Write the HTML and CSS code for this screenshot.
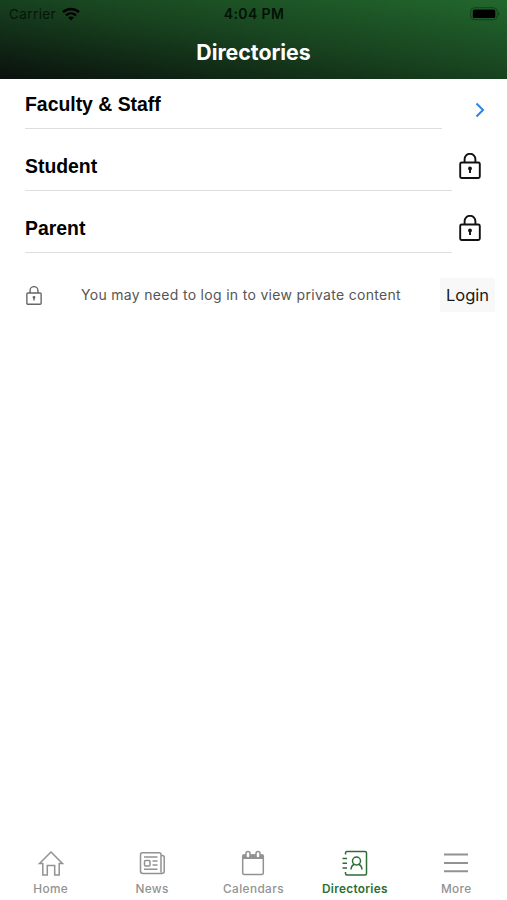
FILE: index.html
```
<!DOCTYPE html>
<html lang="en">
<head>
    <meta charset="utf-8">
    <title>Directories</title>
    <link rel="stylesheet" href="styles.css">
</head>
<body>
    <header>
        <div class="status">
            <div class="carrier">
                <span>Carrier</span>
                <svg width="18" height="14" viewBox="0 0 18 14">
                    <path d="M1 5.200C5.500 .9 12.500 .9 17 5.200" fill="none" stroke="#000" stroke-width="2.500"/>
                    <path d="M4 8.300c3-2.700 7-2.700 10 0" fill="none" stroke="#000" stroke-width="2.300"/>
                    <path d="M6.200 10.600c1.700-1.400 3.900-1.400 5.600 0L9 13.400z"/>
                </svg>
            </div>
            <span class="time">4:04 PM</span>
            <svg class="battery" width="30" height="14" viewBox="0 0 30 14">
                <rect x=".7" y=".7" width="26.600" height="12" rx="4" fill="none" stroke="#000" stroke-opacity=".35"/>
                <rect x="2.800" y="2.500" width="22.500" height="8.500" rx="1.500"/>
                <path d="M28.500 4.700v4c1.300-.8 1.300-3.200 0-4z" fill-opacity=".4"/>
            </svg>
        </div>
        <h1>Directories</h1>
    </header>

    <main>
        <ul class="list">
            <li class="open">
                <span class="name">Faculty &amp; Staff</span>
                <svg class="chevron" width="10" height="16" viewBox="0 0 10 16"><path d="M1.500 1.500L8 8l-6.500 6.500"/></svg>
            </li>
            <li>
                <span class="name">Student</span>
                <svg class="lock" width="22" height="26" viewBox="0 0 22 26">
                    <path d="M5.600 9.500V6.200a5.400 5.400 0 0 1 10.800 0v3.300"/>
                    <rect x="1.200" y="9.500" width="19.600" height="15.500" rx="1.500"/>
                    <circle cx="11" cy="15.500" r="1"/>
                    <path d="M11 15.500v4.500"/>
                </svg>
            </li>
            <li>
                <span class="name">Parent</span>
                <svg class="lock" width="22" height="26" viewBox="0 0 22 26">
                    <path d="M5.600 9.500V6.200a5.400 5.400 0 0 1 10.800 0v3.300"/>
                    <rect x="1.200" y="9.500" width="19.600" height="15.500" rx="1.500"/>
                    <circle cx="11" cy="15.500" r="1"/>
                    <path d="M11 15.500v4.500"/>
                </svg>
            </li>
        </ul>
        <div class="login">
            <svg class="lock" width="16" height="19" viewBox="0 0 22 26">
                <path d="M5.600 9.500V6.200a5.400 5.400 0 0 1 10.800 0v3.300"/>
                <rect x="1.200" y="9.500" width="19.600" height="15.500" rx="1.500"/>
                <circle cx="11" cy="15.500" r="1"/>
                <path d="M11 15.500v4.500"/>
            </svg>
            <p>You may need to log in to view private content</p>
            <button type="button">Login</button>
        </div>
    </main>

    <nav>
        <a>
            <svg width="28" height="28" viewBox="0 0 28 28">
                <path d="M2.500 14.500L14 3l11.500 11.500h-3.300V26h-4.500v-9.500h-7.400V26h-4.500V14.500z"/>
            </svg>
            <span>Home</span>
        </a>
        <a>
            <svg width="28" height="28" viewBox="0 0 28 28">
                <path d="M23 6.500h1.200a2 2 0 0 1 2 2V22a2.500 2.500 0 0 1-2.500 2.500H5A2.500 2.500 0 0 1 2.500 22V5.500A1.800 1.800 0 0 1 4.300 3.700h16.900A1.800 1.800 0 0 1 23 5.500v18"/>
                <path d="M6 8h13.500M14.500 12h5M14.500 16h5M6 20.200h13.500"/>
                <rect x="6.500" y="11.500" width="5.500" height="5.500" rx="1"/>
            </svg>
            <span>News</span>
        </a>
        <a>
            <svg width="28" height="28" viewBox="0 0 28 28">
                <rect x="3.700" y="6" width="20.600" height="19.500" rx="1.500"/>
                <path class="fill" d="M3.500 5.500h21V10h-21z"/>
                <rect class="ring" x="7" y="2.500" width="4" height="6.500" rx="2"/>
                <rect class="ring" x="17" y="2.500" width="4" height="6.500" rx="2"/>
            </svg>
            <span>Calendars</span>
        </a>
        <a class="active">
            <svg width="28" height="28" viewBox="0 0 28 28">
                <path d="M4.500 5.500V4a1.500 1.500 0 0 1 1.500-1.500h18A1.500 1.500 0 0 1 25.500 4v20.500A1.500 1.500 0 0 1 24 26H6a1.500 1.500 0 0 1-1.500-1.500V23M1.500 9.500h4.500M1.500 14.200h4.500M1.500 19h4.500"/>
                <circle cx="15.500" cy="12" r="4"/>
                <path d="M10 20.500c.2-2.700 1.500-4.500 3.600-5.200M21 20.500c-.2-2.700-1.500-4.500-3.600-5.200"/>
            </svg>
            <span>Directories</span>
        </a>
        <a>
            <svg width="28" height="28" viewBox="0 0 28 28">
                <path class="bars" d="M2 5.500h24M2 14h24M2 22.300h24"/>
            </svg>
            <span>More</span>
        </a>
    </nav>
</body>
</html>
```
FILE: styles.css
```
* {
    box-sizing: border-box;
}

body {
    margin: 0;
    height: 900px;
    display: flex;
    flex-direction: column;
    font-family: Inter, "Liberation Sans", sans-serif;
    background-color: #fff;
    color: #000;
}

header {
    height: 79px;
    background: linear-gradient(to top right, #0a110d 0%, #18431f 52%, #22672d 100%);
}

.status {
    display: grid;
    grid-template-columns: 1fr auto 1fr;
    align-items: center;
    height: 27px;
    padding: 0 7px 0 9px;
    font-size: 13.5px;
}

.carrier {
    display: flex;
    align-items: center;
    gap: 6px;
    color: #06150a;
    letter-spacing: 0.4px;
}

.time {
    margin-right: 1px;
    color: #031106;
    font-size: 14px;
    font-weight: 600;
    letter-spacing: 0.4px;
}

.battery {
    justify-self: end;
}

h1 {
    margin: 10px 0 0;
    color: #fff;
    font-size: 21.3px;
    font-weight: 650;
    line-height: 30px;
    text-align: center;
}

main {
    flex: 1;
}

.list {
    list-style: none;
    margin: 0;
    padding: 0 26px 0 25px;
}

.list li {
    display: flex;
    align-items: center;
    gap: 7px;
    height: 62px;
}

.list .open {
    height: 50px;
    gap: 33px;
    margin-right: -4px;
}

.name {
    flex: 1;
    height: 100%;
    padding-bottom: 12px;
    border-bottom: 1px solid #dedede;
    font-family: "Liberation Sans", sans-serif;
    font-size: 19.4px;
    font-weight: bold;
    display: flex;
    align-items: flex-end;
}

.chevron {
    margin-top: 12px;
    fill: none;
    stroke: #2585ee;
    stroke-width: 2;
}

.lock {
    fill: none;
    stroke: #111;
    stroke-width: 1.9;
}

.list .lock {
    margin-top: 12px;
}

.login {
    display: flex;
    align-items: center;
    margin-top: 25px;
    padding: 0 12px 0 26px;
}

.login .lock {
    stroke: #666;
}

.login p {
    flex: 1;
    margin: 0 0 2px 39px;
    color: #555;
    font-size: 14px;
    letter-spacing: 0.31px;
    white-space: nowrap;
}

.login button {
    width: 55px;
    height: 34px;
    padding: 0;
    border: none;
    background-color: #f8f8f8;
    color: #1a1a1a;
    font-family: inherit;
    font-size: 16.5px;
}

nav {
    display: grid;
    grid-template-columns: repeat(5, 1fr);
    height: 51px;
}

nav a {
    display: flex;
    flex-direction: column;
    align-items: center;
    color: #929292;
    font-size: 11.8px;
    font-weight: 500;
    line-height: 14px;
}

nav span {
    margin-top: 5px;
    letter-spacing: 0.4px;
}

nav svg {
    fill: none;
    stroke: currentColor;
    stroke-width: 1.5;
}

nav .active {
    color: #2c6e35;
}

.active span {
    font-weight: 600;
    letter-spacing: 0.3px;
}

nav .fill {
    fill: currentColor;
    stroke: none;
}

nav .ring {
    fill: #fff;
}

nav .bars {
    stroke-width: 2;
}
```
